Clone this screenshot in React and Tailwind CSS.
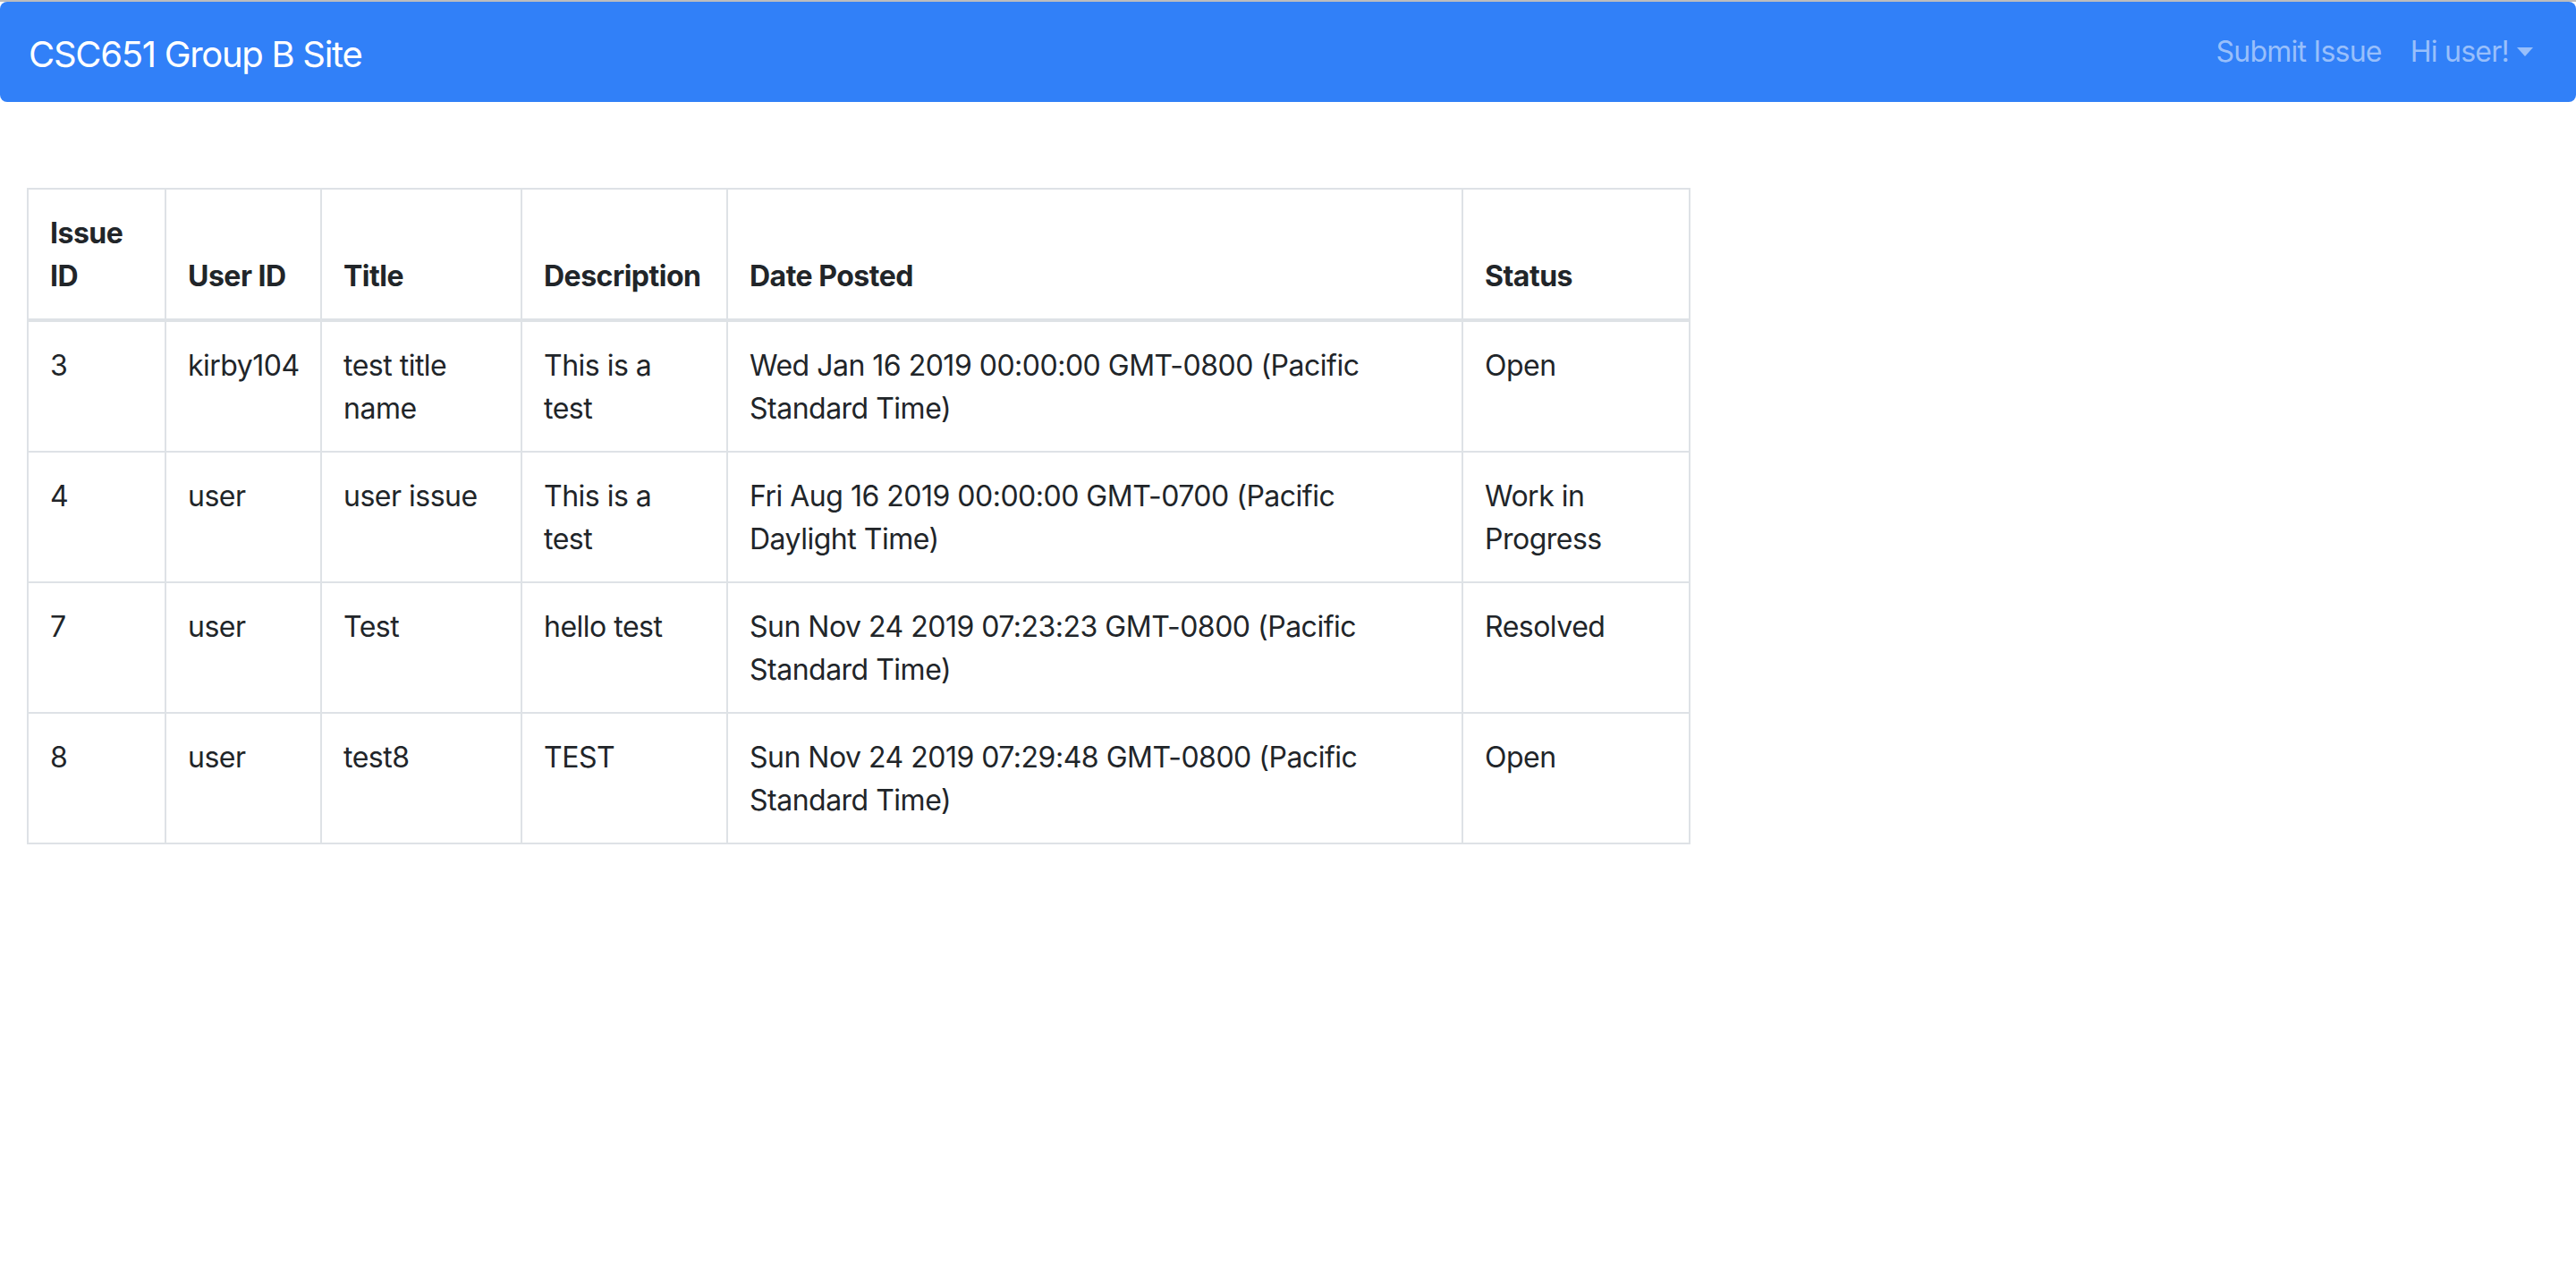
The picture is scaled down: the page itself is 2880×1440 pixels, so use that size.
import React from "react";

const rows = [
  ["3", "kirby104", "test title name", "This is a test", "Wed Jan 16 2019 00:00:00 GMT-0800 (Pacific Standard Time)", "Open"],
  ["4", "user", "user issue", "This is a test", "Fri Aug 16 2019 00:00:00 GMT-0700 (Pacific Daylight Time)", "Work in Progress"],
  ["7", "user", "Test", "hello test", "Sun Nov 24 2019 07:23:23 GMT-0800 (Pacific Standard Time)", "Resolved"],
  ["8", "user", "test8", "TEST", "Sun Nov 24 2019 07:29:48 GMT-0800 (Pacific Standard Time)", "Open"],
];

const headers = ["Issue ID", "User ID", "Title", "Description", "Date Posted", "Status"];
const widths = ["w-[154px]", "w-[174px]", "w-[224px]", "w-[230px]", "w-[822px]", "w-[254px]"];

export default function App() {
  return (
    <div className="min-h-screen bg-white text-[#212529] font-['Inter','Noto_Sans',sans-serif]">
      <div className="h-[2px] bg-[#bdbdbd]" />
      <nav className="flex items-center justify-between h-[112px] px-[32px] bg-[#3180f8] rounded-[8px]">
        <a className="pt-[6px] text-[40px] leading-[60px] text-white tracking-[-1.3px]">CSC651 Group B Site</a>
        <div className="flex items-center">
          <a className="px-[16px] text-[32px] leading-[48px] text-[#98bffb] tracking-[-0.75px]">Submit Issue</a>
          <a className="flex items-center px-[16px] text-[32px] leading-[48px] text-[#98bffb] tracking-[-0.75px]">
            Hi user!
            <span className="ml-[9px] w-0 h-0 border-l-[9px] border-r-[9px] border-t-[10px] border-l-transparent border-r-transparent border-t-[#98bffb]" />
          </a>
        </div>
      </nav>
      <div className="px-[30px] mt-[96px]">
        <table className="table-fixed border-collapse w-[1858px] text-[32px] leading-[48px] tracking-[-0.5px]">
          <colgroup>
            {widths.map((w, i) => (
              <col key={i} className={w} />
            ))}
          </colgroup>
          <thead>
            <tr>
              {headers.map((h) => (
                <th
                  key={h}
                  className="text-left align-bottom font-bold px-[24px] pt-[25px] pb-[23px] border-2 border-[#dee2e6] border-b-4"
                >
                  {h === "Issue ID" ? (
                    <>
                      Issue
                      <br />
                      ID
                    </>
                  ) : (
                    h
                  )}
                </th>
              ))}
            </tr>
          </thead>
          <tbody>
            {rows.map((r, i) => (
              <tr key={i}>
                {r.map((c, j) => (
                  <td key={j} className="align-top px-[24px] pt-[25px] pb-[23px] border-2 border-[#dee2e6] font-normal">
                    {c}
                  </td>
                ))}
              </tr>
            ))}
          </tbody>
        </table>
      </div>
    </div>
  );
}
